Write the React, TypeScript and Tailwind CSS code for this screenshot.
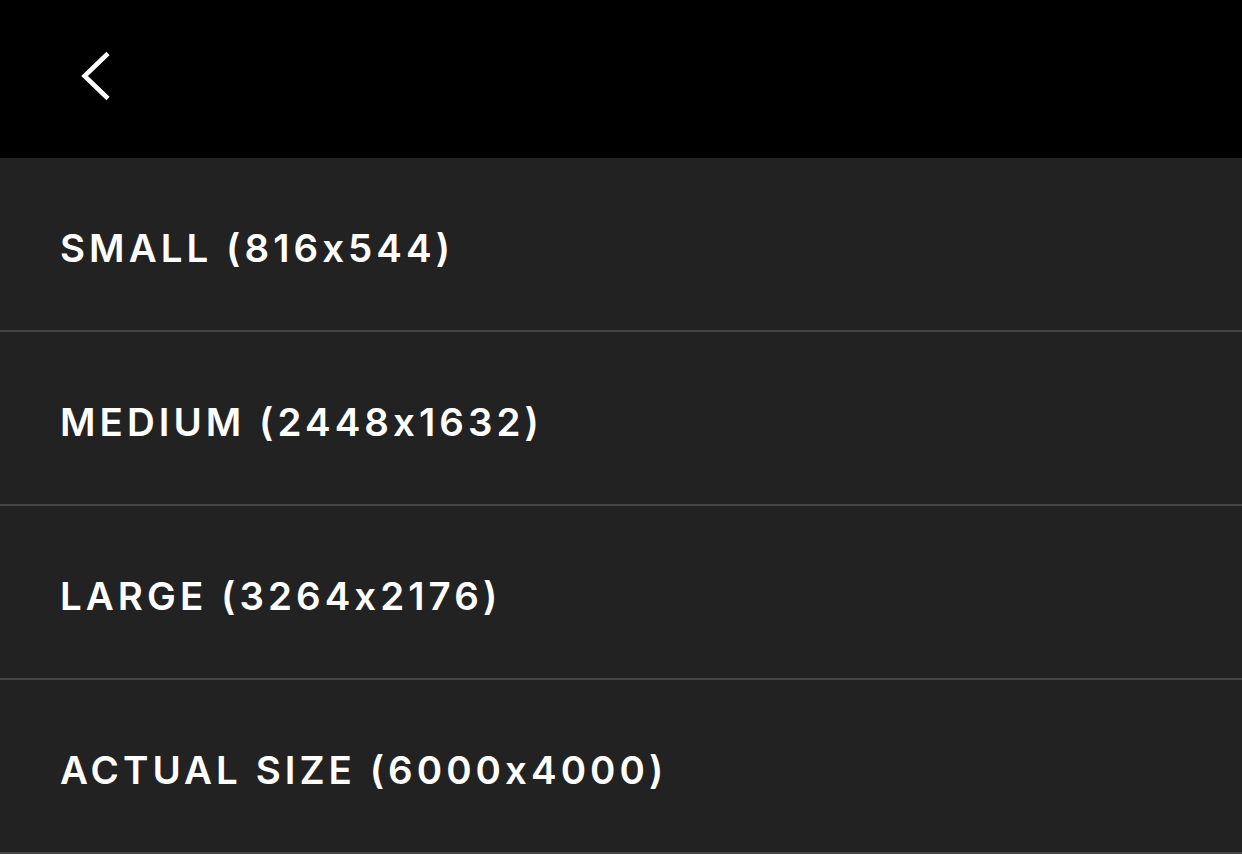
export default function App() {
  const items = [
    "SMALL (816x544)",
    "MEDIUM (2448x1632)",
    "LARGE (3264x2176)",
    "ACTUAL SIZE (6000x4000)",
  ];
  return (
    <div className="w-[1242px] h-[854px] bg-[#222222] overflow-hidden" style={{ fontFamily: 'Inter, "Open Sans", "Liberation Sans", sans-serif' }}>
      <div className="h-[158px] bg-black flex items-start">
        <svg width="40" height="60" viewBox="0 0 40 60" className="mt-[46px] ml-[76px]" fill="none">
          <path d="M32 7.5 L8.5 30 L32 52.5" stroke="#ffffff" strokeWidth="4.6" strokeLinecap="butt" strokeLinejoin="miter" />
        </svg>
      </div>
      {items.map((t) => (
        <div key={t} className="h-[174px] border-b-2 border-[#454545] flex items-center pl-[60px] pt-[9px]">
          <span className="text-white text-[38.5px] font-semibold tracking-[0.105em] leading-none">{t}</span>
        </div>
      ))}
    </div>
  );
}
